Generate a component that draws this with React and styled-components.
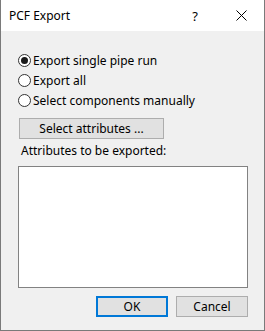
import React, { useState } from 'react';
import styled, { createGlobalStyle } from 'styled-components';

const Global = createGlobalStyle`
  html, body { margin: 0; padding: 0; }
  body { width: 265px; height: 331px; overflow: hidden; background: #f0f0f0; }
  * { box-sizing: border-box; }
`;

const Window = styled.div`
  width: 265px;
  height: 331px;
  display: flex;
  flex-direction: column;
  background: #f0f0f0;
  border: 1px solid #7a7a7a;
  border-top: none;
  font-family: "Noto Sans", "Open Sans", sans-serif;
  font-size: 12px;
  color: #000;
`;

const TitleBar = styled.div`
  height: 31px;
  flex: none;
  background: #fff;
  display: flex;
  align-items: center;
  padding-left: 8px;
`;

const Title = styled.span`
  flex: 1;
  font-size: 12px;
  padding-bottom: 1px;
`;

const TitleButton = styled.div`
  width: 46px;
  height: 30px;
  display: flex;
  align-items: center;
  justify-content: center;
  font-size: 13px;
`;

const Body = styled.div`
  flex: 1;
  display: flex;
  flex-direction: column;
  padding: 19px 16px 0 17px;
`;

const RadioGroup = styled.div`
  display: flex;
  flex-direction: column;
`;

const RadioRow = styled.label`
  display: flex;
  align-items: center;
  height: 20px;
  gap: 2px;
  cursor: default;
`;

const RadioCircle = styled.span`
  width: 13px;
  height: 13px;
  border-radius: 50%;
  border: 1px solid #333;
  background: #fff;
  display: flex;
  align-items: center;
  justify-content: center;
  &::after {
    content: "";
    width: 7px;
    height: 7px;
    border-radius: 50%;
    background: ${p => (p.$checked ? '#1a1a1a' : 'transparent')};
  }
`;

const Button = styled.button`
  height: 21px;
  width: ${p => p.$width}px;
  background: #e1e1e1;
  border: ${p => (p.$default ? '2px solid #0078d7' : '1px solid #adadad')};
  font-family: inherit;
  font-size: 12px;
  color: #000;
  padding: 0;
  display: flex;
  align-items: center;
  justify-content: center;
`;

const AttrButtonWrap = styled.div`
  margin-top: 8px;
  padding-left: 1px;
`;

const Label = styled.div`
  margin-top: 1px;
  padding-left: 3px;
  height: 20px;
  display: flex;
  align-items: center;
`;

const ListBox = styled.div`
  margin-top: 6px;
  width: 230px;
  height: 122px;
  flex: none;
  background: #fff;
  border: 1px solid #828282;
`;

const Footer = styled.div`
  margin-top: 8px;
  display: flex;
  justify-content: flex-end;
  gap: 8px;
`;

const options = [
  'Export single pipe run',
  'Export all',
  'Select components manually',
];

export default function App() {
  const [sel, setSel] = useState(0);
  return (
    <>
      <Global />
      <Window>
        <TitleBar>
          <Title>PCF Export</Title>
          <TitleButton>?</TitleButton>
          <TitleButton>
            <svg width="11" height="11" viewBox="0 0 11 11">
              <path d="M0.5 0.5 L10.5 10.5 M10.5 0.5 L0.5 10.5" stroke="#000" strokeWidth="1" />
            </svg>
          </TitleButton>
        </TitleBar>
        <Body>
          <RadioGroup>
            {options.map((o, i) => (
              <RadioRow key={o} onClick={() => setSel(i)}>
                <RadioCircle $checked={sel === i} />
                {o}
              </RadioRow>
            ))}
          </RadioGroup>
          <AttrButtonWrap>
            <Button $width={145}>Select attributes ...</Button>
          </AttrButtonWrap>
          <Label>Attributes to be exported:</Label>
          <ListBox />
          <Footer>
            <Button $width={72} $default>OK</Button>
            <Button $width={72}>Cancel</Button>
          </Footer>
        </Body>
      </Window>
    </>
  );
}
